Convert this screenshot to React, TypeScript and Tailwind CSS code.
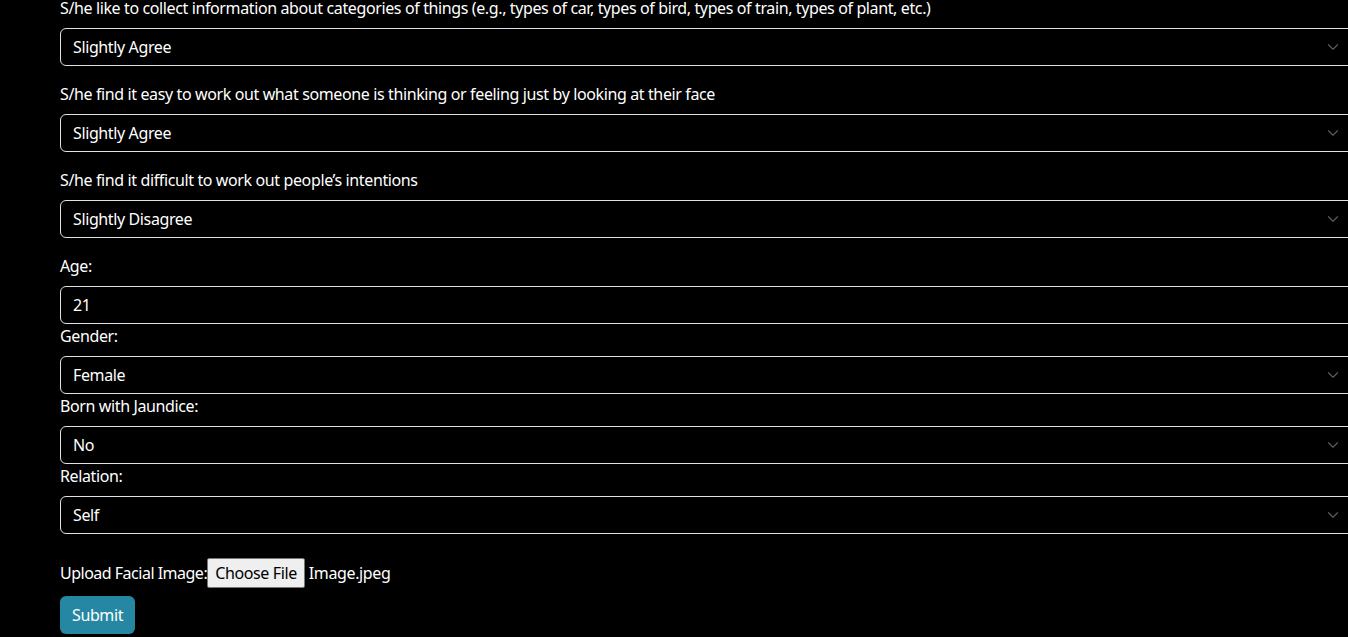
import React from 'react';

const Chevron = () => (
  <svg className="pointer-events-none absolute right-[14px] top-1/2 -translate-y-1/2" width="12" height="12" viewBox="0 0 16 16" fill="none">
    <path d="M2 5l6 6 6-6" stroke="#5c5c5c" strokeWidth="1.5" strokeLinecap="round" strokeLinejoin="round" />
  </svg>
);

const SelectBox = ({ value }: { value: string }) => (
  <div className="relative h-[38px] w-full rounded-[6px] border border-[#dee2e6] bg-black px-3 flex items-center text-white">
    <span>{value}</span>
    <Chevron />
  </div>
);

const questions = [
  {
    label: 'S/he like to collect information about categories of things (e.g., types of car, types of bird, types of train, types of plant, etc.)',
    value: 'Slightly Agree',
  },
  {
    label: 'S/he find it easy to work out what someone is thinking or feeling just by looking at their face',
    value: 'Slightly Agree',
  },
  {
    label: 'S/he find it difficult to work out people\u2019s intentions',
    value: 'Slightly Disagree',
  },
];

const details = [
  { label: 'Gender:', value: 'Female' },
  { label: 'Born with Jaundice:', value: 'No' },
  { label: 'Relation:', value: 'Self' },
];

export default function App() {
  return (
    <div className="min-h-screen bg-black text-white text-[16px] leading-[24px] tracking-[-0.38px] overflow-hidden" style={{ fontFamily: '"Segoe UI", "Noto Sans", sans-serif' }}>
      <div className="pl-[60px] -mr-[6px] -mt-[4px]">
        {questions.map((q, i) => (
          <div key={i} className="mb-4">
            <div className="mb-2">{q.label}</div>
            <SelectBox value={q.value} />
          </div>
        ))}

        <div className="mb-2">Age:</div>
        <div className="h-[38px] w-full rounded-[6px] border border-[#dee2e6] bg-black px-3 flex items-center">21</div>

        {details.map((d, i) => (
          <div key={i}>
            <div className="mb-2">{d.label}</div>
            <SelectBox value={d.value} />
          </div>
        ))}

        <div className="mt-[24px] flex items-center h-[30px]">
          <span className="tracking-[-0.5px]">Upload Facial Image:</span>
          <span className="h-[30px] px-[7px] flex items-center border border-[#767676] bg-[#efefef] text-black rounded-[2px]">Choose File</span>
          <span className="ml-[4px]">Image.jpeg</span>
        </div>

        <button className="mt-2 h-[38px] px-3 rounded-[6px] bg-[#2687a3] text-white">Submit</button>
      </div>
    </div>
  );
}
